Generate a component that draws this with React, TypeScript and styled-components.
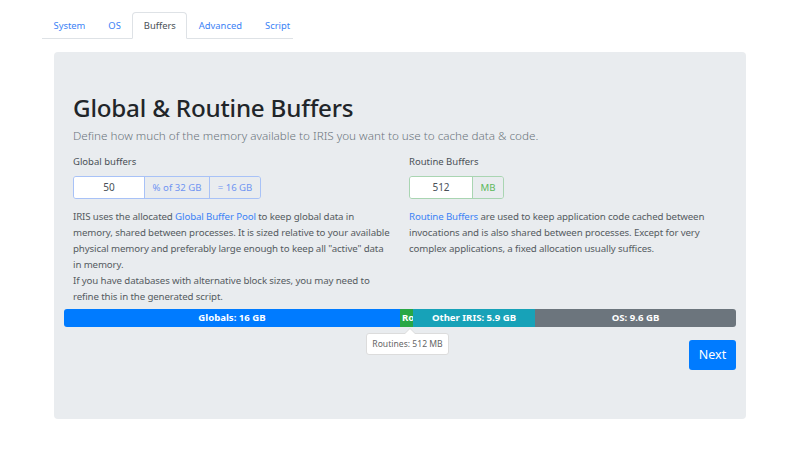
import React from "react";
import styled, { createGlobalStyle } from "styled-components";

const GlobalStyle = createGlobalStyle`
  html, body { margin: 0; padding: 0; background: #ffffff; }
  body { font-family: "Noto Sans", "Open Sans", sans-serif; color: #212529; }
  * { box-sizing: border-box; }
`;

const Page = styled.div`
  width: 800px;
  height: 450px;
  padding: 12px 54px 0 54px;
`;

const Tabs = styled.nav`
  display: flex;
  margin-left: -12px;
  width: 251px;
  height: 27px;
  border-bottom: 1px solid #dee2e6;
`;

const Tab = styled.div<{ $active?: boolean }>`
  height: 27px;
  padding: 0 10.5px;
  display: flex;
  align-items: center;
  font-size: 9.4px;
  color: ${(p) => (p.$active ? "#495057" : "#3b82f6")};
  background: ${(p) => (p.$active ? "#ffffff" : "transparent")};
  border: 1px solid ${(p) => (p.$active ? "#dee2e6" : "transparent")};
  border-bottom-color: ${(p) => (p.$active ? "#ffffff" : "transparent")};
  border-radius: 4px 4px 0 0;
  margin-bottom: -1px;
`;

const Jumbotron = styled.section`
  margin-top: 13px;
  height: 367px;
  background: #e9ecef;
  border-radius: 4px;
  padding: 41px 10px 0 10px;
`;

const Header = styled.div`
  padding: 0 9px;
`;

const Title = styled.h1`
  margin: 0;
  font-size: 24.2px;
  line-height: 30px;
  font-weight: 500;
  color: #212529;
  letter-spacing: -0.2px;
`;

const Lead = styled.p`
  margin: 3px 0 0 0;
  font-size: 11.7px;
  line-height: 18px;
  font-weight: 300;
  color: #6c757d;
`;

const Row = styled.div`
  display: grid;
  grid-template-columns: 1fr 1fr;
  margin-top: 10px;
`;

const Col = styled.div`
  padding: 0 9px;
`;

const Label = styled.div`
  font-size: 9.5px;
  line-height: 16px;
  color: #495057;
  margin-bottom: 4px;
`;

const InputGroup = styled.div<{ $tone: string }>`
  display: inline-flex;
  height: 23px;
  border: 1px solid ${(p) => p.$tone};
  border-radius: 3px;
  overflow: hidden;
`;

const Input = styled.div<{ $w: number }>`
  width: ${(p) => p.$w}px;
  background: #ffffff;
  display: flex;
  align-items: center;
  justify-content: center;
  font-size: 10px;
  color: #495057;
`;

const Addon = styled.div<{ $w: number; $tone: string; $text: string }>`
  width: ${(p) => p.$w}px;
  border-left: 1px solid ${(p) => p.$tone};
  display: flex;
  align-items: center;
  justify-content: center;
  font-size: 9.6px;
  color: ${(p) => p.$text};
  background: #e9ecef;
`;

const Text = styled.p`
  margin: 10px 0 0 0;
  font-size: 9.7px;
  letter-spacing: -0.12px;
  line-height: 16px;
  color: #555b61;
`;

const Link = styled.span`
  color: #3b82f6;
`;

const BarWrap = styled.div`
  position: relative;
  margin-top: 4px;
`;

const Bar = styled.div`
  display: flex;
  height: 18px;
  border-radius: 3px;
  overflow: hidden;
`;

const Segment = styled.div<{ $w: number; $bg: string; $start?: boolean }>`
  width: ${(p) => p.$w}px;
  flex: none;
  background: ${(p) => p.$bg};
  color: #ffffff;
  font-size: 9.6px;
  font-weight: 700;
  display: flex;
  align-items: center;
  justify-content: ${(p) => (p.$start ? "flex-start" : "center")};
  padding-left: ${(p) => (p.$start ? "2px" : "0")};
  white-space: nowrap;
  overflow: hidden;
`;

const Tooltip = styled.div`
  position: absolute;
  top: 24px;
  left: 302px;
  width: 83px;
  height: 22px;
  background: #ffffff;
  border: 1px solid #dcdcdc;
  border-radius: 3px;
  font-size: 8.6px;
  color: #666;
  display: flex;
  align-items: center;
  justify-content: center;
  &::before {
    content: "";
    position: absolute;
    top: -6px;
    left: 37px;
    border-left: 6px solid transparent;
    border-right: 6px solid transparent;
    border-bottom: 6px solid #dcdcdc;
  }
  &::after {
    content: "";
    position: absolute;
    top: -5px;
    left: 38px;
    border-left: 5px solid transparent;
    border-right: 5px solid transparent;
    border-bottom: 5px solid #ffffff;
  }
`;

const Footer = styled.div`
  display: flex;
  justify-content: flex-end;
  margin-top: 13px;
`;

const Button = styled.button`
  width: 47px;
  height: 30px;
  border: none;
  border-radius: 3px;
  background: #007bff;
  color: #ffffff;
  font-family: inherit;
  font-size: 12.5px;
  padding: 0;
`;

export default function App() {
  return (
    <>
      <GlobalStyle />
      <Page>
        <Tabs>
          <Tab>System</Tab>
          <Tab>OS</Tab>
          <Tab $active>Buffers</Tab>
          <Tab>Advanced</Tab>
          <Tab>Script</Tab>
        </Tabs>
        <Jumbotron>
          <Header>
            <Title>Global &amp; Routine Buffers</Title>
            <Lead>Define how much of the memory available to IRIS you want to use to cache data &amp; code.</Lead>
          </Header>
          <Row>
            <Col>
              <Label>Global buffers</Label>
              <InputGroup $tone="#a8c2f7">
                <Input $w={70}>50</Input>
                <Addon $w={65} $tone="#a8c2f7" $text="#6f95f2">% of 32 GB</Addon>
                <Addon $w={51} $tone="#a8c2f7" $text="#6f95f2">= 16 GB</Addon>
              </InputGroup>
              <Text>
                IRIS uses the allocated <Link>Global Buffer Pool</Link> to keep global data in memory, shared between
                processes. It is sized relative to your available physical memory and preferably large enough to keep
                all "active" data in memory.
                <br />
                If you have databases with alternative block sizes, you may need to refine this in the generated
                script.
              </Text>
            </Col>
            <Col>
              <Label>Routine Buffers</Label>
              <InputGroup $tone="#a9d5b2">
                <Input $w={62}>512</Input>
                <Addon $w={31} $tone="#a9d5b2" $text="#5cb85c">MB</Addon>
              </InputGroup>
              <Text>
                <Link>Routine Buffers</Link> are used to keep application code cached between invocations and is also
                shared between processes. Except for very complex applications, a fixed allocation usually suffices.
              </Text>
            </Col>
          </Row>
          <BarWrap>
            <Bar>
              <Segment $w={336} $bg="#007bff">Globals: 16 GB</Segment>
              <Segment $w={13} $bg="#28a745" $start>Routines</Segment>
              <Segment $w={122} $bg="#17a2b8">Other IRIS: 5.9 GB</Segment>
              <Segment $w={201} $bg="#6c757d">OS: 9.6 GB</Segment>
            </Bar>
            <Tooltip>Routines: 512 MB</Tooltip>
          </BarWrap>
          <Footer>
            <Button>Next</Button>
          </Footer>
        </Jumbotron>
      </Page>
    </>
  );
}
